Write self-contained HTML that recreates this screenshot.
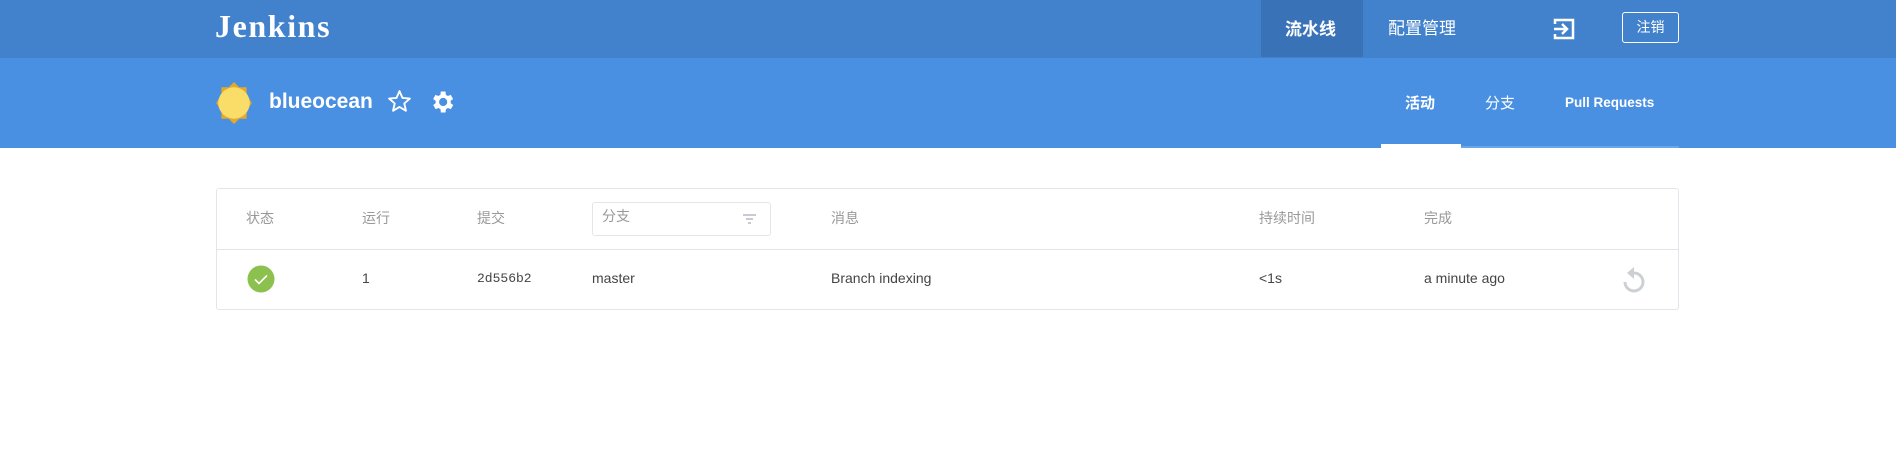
<!DOCTYPE html>
<html><head><meta charset="utf-8"><style>
*{margin:0;padding:0;box-sizing:border-box}
body{width:1896px;height:462px;background:#fff;font-family:"Liberation Sans","Noto Sans CJK SC",sans-serif;position:relative;overflow:hidden}
.a{position:absolute;white-space:nowrap}
.top{position:absolute;left:0;top:0;width:1896px;height:58px;background:#4282cc}
.sub{position:absolute;left:0;top:58px;width:1896px;height:90px;background:#4a90e2}
.h{color:#999;font-size:14px;top:208px}
.r{color:#444;font-size:14px;top:270px}
</style></head><body>
<div class="top"></div>
<div class="sub"></div>
<div class="a" style="left:215px;top:8px;color:#fff;font-family:'Liberation Serif',serif;font-weight:bold;font-size:32px;letter-spacing:1.6px">Jenkins</div>
<div class="a" style="left:1261px;top:0;width:102px;height:57px;background:#3a72b8"></div>
<div class="a" style="left:1285px;top:15px;color:#fff;font-size:17px;font-weight:bold">流水线</div>
<div class="a" style="left:1388px;top:14px;color:#fff;font-size:17px">配置管理</div>
<svg class="a" style="left:1552px;top:17px" width="24" height="24" viewBox="0 0 24 24"><path d="M3 7V3h18v18H3v-4" fill="none" stroke="#fff" stroke-width="2.5"/><path d="M2 12h12M10 7l5 5-5 5" fill="none" stroke="#fff" stroke-width="2.5"/></svg>
<div class="a" style="left:1622px;top:12px;width:57px;height:31px;border:1px solid #fff;border-radius:3px;color:#fff;font-size:14px;text-align:center;line-height:29px">注销</div>
<svg class="a" style="left:214px;top:82px" width="40" height="42" viewBox="0 0 38 40"><polygon points="19,0 24,5 31,5 31,12 36,20 31,28 31,35 24,35 19,40 14,35 7,35 7,28 2,20 7,12 7,5 14,5" fill="#e5a827"/><circle cx="19" cy="20" r="15" fill="#fadc69"/></svg>
<div class="a" style="left:269px;top:90px;color:#fff;font-size:21px;font-weight:bold">blueocean</div>
<svg class="a" style="left:387px;top:89px" width="25" height="25" viewBox="0 0 24 24"><path d="M12 2l2.9 6.6 7.1.6-5.4 4.7 1.6 7L12 17.2 5.8 20.9l1.6-7L2 9.2l7.1-.6z" fill="none" stroke="#fff" stroke-width="1.8" stroke-linejoin="round"/></svg>
<svg class="a" style="left:428px;top:88px" width="28" height="28" viewBox="0 0 24 24"><path fill="#fff" d="M19.4 13a7.5 7.5 0 000-2l2.1-1.6-2-3.5-2.5 1a7.3 7.3 0 00-1.7-1L15 3h-4l-.4 2.9a7.3 7.3 0 00-1.7 1l-2.5-1-2 3.5L6.600 11a7.5 7.5 0 000 2l-2.1 1.6 2 3.5 2.5-1a7.3 7.3 0 001.7 1L11 21h4l.4-2.9a7.3 7.3 0 001.7-1l2.5 1 2-3.5zM13 15.5A3.5 3.5 0 1113 8.5a3.5 3.5 0 010 7z"/></svg>
<div class="a" style="left:1405px;top:92px;color:#fff;font-size:15px;font-weight:bold">活动</div>
<div class="a" style="left:1485px;top:92px;color:#fff;font-size:15px">分支</div>
<div class="a" style="left:1565px;top:95px;color:#fff;font-size:13.5px;font-weight:bold">Pull Requests</div>
<div class="a" style="left:1461px;top:146px;width:218px;height:2px;background:#6aa6ea"></div>
<div class="a" style="left:1381px;top:144px;width:80px;height:4px;background:#fff"></div>
<div class="a" style="left:216px;top:188px;width:1463px;height:122px;border:1px solid #e2e6ea;border-radius:3px"></div>
<div class="a" style="left:217px;top:249px;width:1461px;height:1px;background:#e2e6ea"></div>
<div class="a h" style="left:246px">状态</div>
<div class="a h" style="left:362px">运行</div>
<div class="a h" style="left:477px">提交</div>
<div class="a" style="left:592px;top:202px;width:179px;height:34px;border:1px solid #e2e6ea;border-radius:3px"></div>
<div class="a h" style="left:602px;top:206px">分支</div>
<svg class="a" style="left:742px;top:213px" width="15" height="12" viewBox="0 0 15 12"><path d="M1 2h13M4 6h7M6 10h3" stroke="#aab" stroke-width="1.3"/></svg>
<div class="a h" style="left:831px">消息</div>
<div class="a h" style="left:1259px">持续时间</div>
<div class="a h" style="left:1424px">完成</div>
<svg class="a" style="left:247px;top:265px" width="28" height="28" viewBox="0 0 28 28"><circle cx="14" cy="14" r="13.5" fill="#8cc04f"/><path d="M8 14.5l4 4 8-8" fill="none" stroke="#fff" stroke-width="1.6"/></svg>
<div class="a r" style="left:362px">1</div>
<div class="a r" style="left:477px;font-family:'Liberation Mono',monospace;font-size:13px;top:271px">2d556b2</div>
<div class="a r" style="left:592px">master</div>
<div class="a r" style="left:831px">Branch indexing</div>
<div class="a r" style="left:1259px">&lt;1s</div>
<div class="a r" style="left:1424px">a minute ago</div>
<svg class="a" style="left:1622px;top:266px" width="24" height="28" viewBox="0 0 24 28"><path d="M12 7a9 9 0 11-9 9" fill="none" stroke="#ccd0d5" stroke-width="3"/><path d="M12 1v12L5 7z" fill="#ccd0d5"/></svg>
</body></html>
